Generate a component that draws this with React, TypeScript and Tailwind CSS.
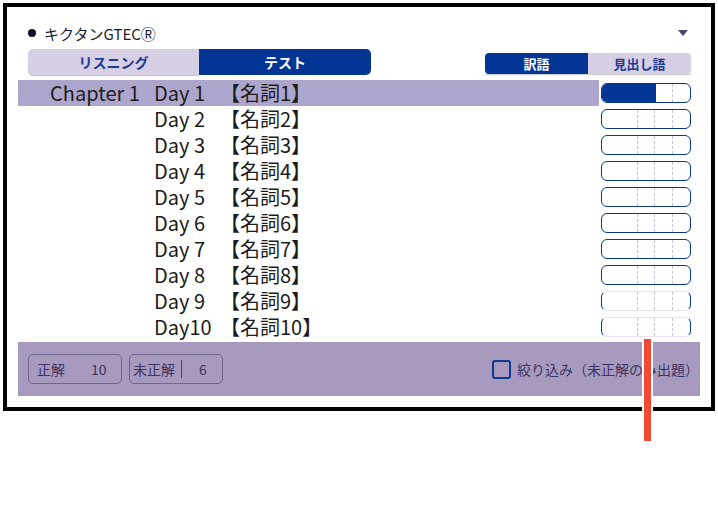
const days = Array.from({ length: 10 }, (_, i) => i + 1);

function Pill({ fill, faint }: { fill: number; faint?: boolean }) {
  return (
    <div
      className={
        "relative ml-[2px] h-[20px] w-[90px] overflow-hidden rounded-[6px] border-[1.5px] " +
        (faint ? "border-x-[#0b3592] border-y-[#e6e3ee]" : "border-[#0b3592]")
      }
    >
      <div className="absolute inset-y-0 left-[35px] border-l border-dashed border-[#c8c0df]" />
      <div className="absolute inset-y-0 left-[52px] border-l border-dashed border-[#c8c0df]" />
      <div className="absolute inset-y-0 left-[70px] border-l border-dashed border-[#c8c0df]" />
      {fill > 0 && (
        <div className="absolute inset-y-0 left-0 bg-[#023595]" style={{ width: fill }} />
      )}
    </div>
  );
}

export default function App() {
  return (
    <div
      className="relative h-[514px] w-[718px] bg-white"
      style={{ fontFamily: '"Noto Sans CJK JP", "Noto Sans", sans-serif' }}
    >
      <div className="ml-[3px] mt-[3px] h-[408px] w-[712px] border-4 border-black bg-white px-[11px]">
        {/* title */}
        <div className="mt-[15px] flex h-[22px] items-center pl-[10px] pr-[12px]">
          <span className="h-[8px] w-[8px] rounded-full bg-[#0d0d26]" />
          <span className="ml-[8px] text-[15px] leading-none text-[#1b1b2c]">キクタンGTECⓇ</span>
          <span className="ml-auto h-0 w-0 border-x-[5px] border-t-[6px] border-x-transparent border-t-[#4b4570]" />
        </div>

        {/* tabs */}
        <div className="mt-[5px] flex h-[26px] items-center pl-[10px] pr-[9px]">
          <div className="flex h-[26px] w-[343px] text-[14px] font-bold leading-none">
            <div className="flex w-[171px] items-center justify-center rounded-l-[5px] bg-[#d7cfe3] text-[#1d3a95] shadow-[0_1px_1px_rgba(0,0,0,0.25)]">
              リスニング
            </div>
            <div className="flex w-[172px] items-center justify-center rounded-r-[5px] bg-[#033595] text-white">
              テスト
            </div>
          </div>
          <div className="ml-auto mt-[3px] flex h-[21px] w-[206px] text-[13px] font-bold leading-none shadow-[0_1px_1px_rgba(0,0,0,0.2)]">
            <div className="flex w-[103px] items-center justify-center rounded-l-[4px] bg-[#033595] text-white">
              訳語
            </div>
            <div className="flex w-[103px] items-center justify-center rounded-r-[4px] bg-[#d7cfe3] text-[#1d3a95]">
              見出し語
            </div>
          </div>
        </div>

        {/* list */}
        <div className="mt-[5px]">
          {days.map((d) => (
            <div key={d} className="flex h-[26px] items-center">
              <div
                className={
                  "flex h-[26px] w-[581px] items-center pl-[32px] text-[20px] leading-none text-[#1c1c1c] " +
                  (d === 1 ? "bg-[#aca6cc]" : "")
                }
              >
                <span className="w-[104px]">{d === 1 ? "Chapter 1" : ""}</span>
                <span className="w-[66px]">{d === 10 ? "Day10" : `Day ${d}`}</span>
                <span>【名詞{d}】</span>
              </div>
              <Pill fill={d === 1 ? 54 : 0} faint={d >= 9} />
            </div>
          ))}
        </div>

        {/* footer */}
        <div className="mt-[2px] flex h-[54px] items-center bg-[#a89abf] pl-[10px] pr-[1px] text-[14px] leading-none text-[#3d3463]">
          <div className="flex h-[30px] w-[94px] items-center rounded-[5px] border border-[#71668f] pl-[8px]">
            <span>正解</span>
            <span className="ml-[26px]">10</span>
          </div>
          <div className="ml-[7px] flex h-[30px] w-[94px] items-center rounded-[5px] border border-[#71668f] pl-[3px]">
            <span>未正解</span>
            <span className="ml-[6px] h-[18px] border-l border-[#4d4470]" />
            <span className="ml-[17px]">6</span>
          </div>
          <div className="ml-auto flex items-center">
            <span className="h-[19px] w-[19px] rounded-[3px] border-2 border-[#0e3a96]" />
            <span className="ml-[6px]">絞り込み（未正解のみ出題）</span>
          </div>
        </div>
      </div>

      {/* red marker */}
      <div className="absolute left-[642px] top-[334px] h-[106px] w-[11px] border-2 border-white bg-[#f24b35]" />
    </div>
  );
}
